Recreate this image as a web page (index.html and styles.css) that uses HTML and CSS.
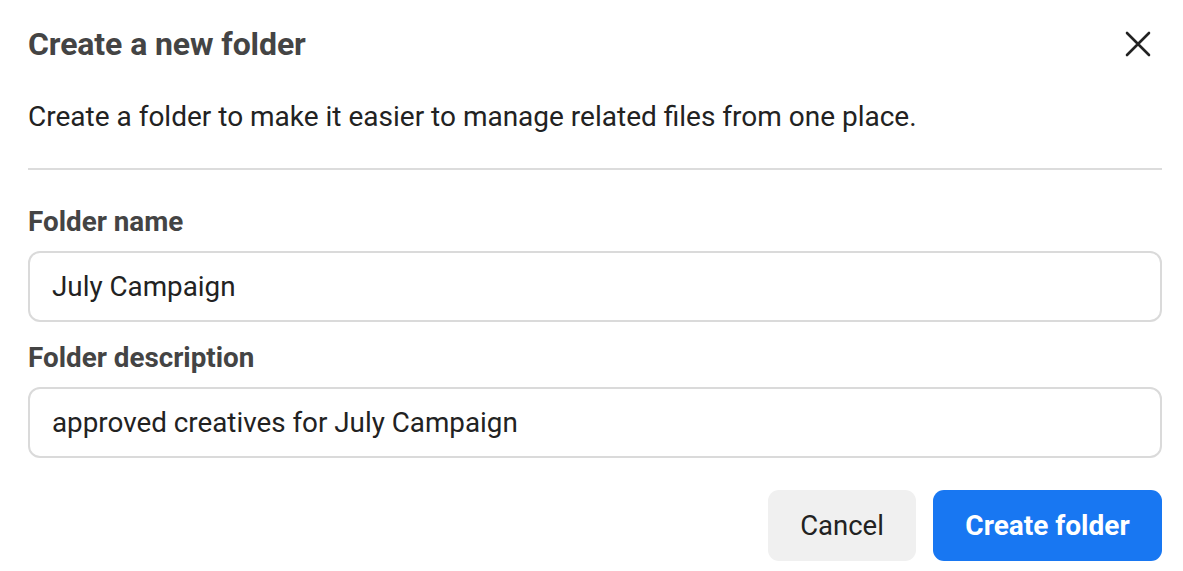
FILE: index.html
```html
<!DOCTYPE html>
<html>
<head>
<meta charset="utf-8">
<link rel="stylesheet" href="styles.css">
</head>
<body>
<div class="dialog">
  <div class="header">
    <h1 class="title">Create a new folder</h1>
    <button class="close" aria-label="Close">
      <svg width="26" height="26" viewBox="0 0 26 26"><path d="M2 2 L24 24 M24 2 L2 24" stroke="#222" stroke-width="2.6" stroke-linecap="round" fill="none"/></svg>
    </button>
  </div>
  <p class="intro">Create a folder to make it easier to manage related files from one place.</p>
  <div class="divider"></div>
  <label class="label">Folder name</label>
  <div class="input">July Campaign</div>
  <label class="label label2">Folder description</label>
  <div class="input">approved creatives for July Campaign</div>
  <div class="actions">
    <button class="btn cancel">Cancel</button>
    <button class="btn primary">Create folder</button>
  </div>
</div>
</body>
</html>
```
FILE: styles.css
```css
* { box-sizing: border-box; }
html, body { margin: 0; background: #fff; }
body { font-family: Roboto, "Liberation Sans", sans-serif; color: #1c1e21; }
.dialog { padding: 0 21px 0 28px; width: 1183px; }
.header { display: flex; align-items: center; justify-content: space-between; height: 88px; }
.title { margin: 0; font-size: 32px; line-height: 38px; font-weight: 700; color: #444; letter-spacing: -0.1px; }
.close { background: none; border: 0; padding: 0; margin-right: 11px; display: flex; width: 26px; height: 26px; }
.intro { margin: 0; font-size: 28px; line-height: 32px; height: 58px; padding-top: 13px; color: #222; }
.divider { height: 2px; background: #dcdcdc; margin-top: 22px; }
.label { display: block; font-size: 27.8px; font-weight: 700; color: #444; margin-top: 36px; line-height: 32px; }
.label2 { margin-top: 20px; }
.input { margin-top: 13px; height: 71px; border: 2px solid #dadada; border-radius: 12px; padding: 0 22px; display: flex; align-items: center; font-size: 27.8px; color: #222; }
.actions { display: flex; justify-content: flex-end; gap: 17px; margin-top: 32px; }
.btn { height: 71px; border: 0; border-radius: 11px; font-family: Roboto, "Liberation Sans", sans-serif; font-size: 27.5px; padding: 0; }
.cancel { width: 148px; background: #f0f0f0; color: #222; }
.primary { width: 229px; background: #1877f2; color: #fff; font-weight: 700; font-size: 28px; }
```
